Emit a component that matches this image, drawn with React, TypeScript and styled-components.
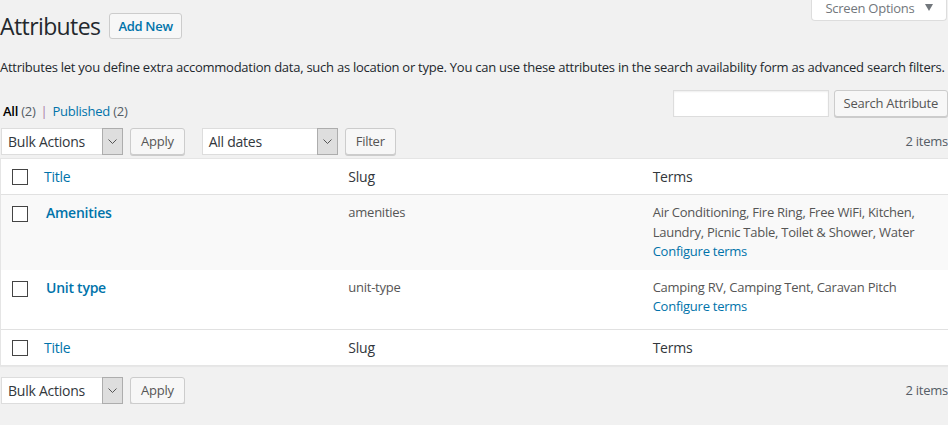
import React from "react";
import styled, { createGlobalStyle } from "styled-components";

const FONT = `"Open Sans", "Noto Sans", "Liberation Sans", sans-serif`;

const GlobalStyle = createGlobalStyle`
  html, body { margin: 0; padding: 0; }
  body {
    background: #f1f1f1;
    font-family: ${FONT};
    font-size: 13px;
    letter-spacing: -0.25px;
    color: #444;
    overflow: hidden;
  }
  * { box-sizing: border-box; }
`;

const Wrap = styled.div`
  width: 950px;
  display: flex;
  flex-direction: column;
`;

const Header = styled.div`
  display: flex;
  align-items: flex-start;
  height: 48px;
`;

const Title = styled.h1`
  margin: 12px 0 0 0;
  font-size: 23px;
  line-height: 29px;
  font-weight: 400;
  letter-spacing: -0.6px;
  color: #23282d;
`;

const Button = styled.button`
  font-family: ${FONT};
  letter-spacing: -0.25px;
  height: 27px;
  padding: 0 10px;
  font-size: 13px;
  line-height: 25px;
  background: #f7f7f7;
  border: 1px solid #ccc;
  border-radius: 3px;
  box-shadow: 0 1px 0 #ccc;
  color: #555;
  white-space: nowrap;
`;

const AddNew = styled(Button)`
  margin: 13px 0 0 9px;
  height: 26px;
  padding: 0 8px;
  color: #0073aa;
  font-weight: 600;
  letter-spacing: -0.3px;
  box-shadow: none;
`;

const SearchButton = styled(Button)`
  padding: 0 9px;
`;

const ScreenOptions = styled.div`
  margin-left: auto;
  margin-right: 3px;
  height: 21px;
  width: 136px;
  background: #fff;
  border: 1px solid #ddd;
  border-top: none;
  border-radius: 0 0 4px 4px;
  display: flex;
  align-items: flex-start;
  justify-content: center;
  gap: 10px;
  padding-top: 1px;
  line-height: 14px;
  color: #72777c;
  font-size: 13px;
`;

const Caret = styled.span`
  width: 0;
  height: 0;
  margin-top: 3px;
  border-left: 4px solid transparent;
  border-right: 4px solid transparent;
  border-top: 7px solid #72777c;
`;

const Desc = styled.p`
  margin: 9px 0 0 0;
  line-height: 20px;
  color: #23282d;
  white-space: nowrap;
`;

const SearchRow = styled.div`
  margin-top: 13px;
  height: 31px;
  display: flex;
  align-items: flex-start;
`;

const SubSub = styled.div`
  align-self: flex-end;
  line-height: 20px;
  padding-left: 3px;
  color: #666;
  display: flex;
  gap: 3px;
`;

const Current = styled.span`
  color: #000;
  font-weight: 600;
`;

const Count = styled.span`
  color: #555d66;
`;

const Sep = styled.span`
  color: #a77aa6;
  margin: 0 2px;
`;

const Link = styled.span`
  color: #0073aa;
`;

const SearchBox = styled.div`
  margin-left: auto;
  display: flex;
  gap: 5px;
  margin-right: 2px;
`;

const Input = styled.div`
  width: 156px;
  height: 27px;
  background: #fff;
  border: 1px solid #ddd;
  box-shadow: inset 0 1px 2px rgba(0, 0, 0, 0.07);
`;

const TableNav = styled.div<{ $top?: boolean }>`
  display: flex;
  align-items: center;
  height: 28px;
  margin-top: ${(p) => (p.$top ? "6px" : "10px")};
`;

const Group = styled.div`
  display: flex;
  align-items: center;
  gap: 7px;
  margin-right: 16px;
`;

const Select = styled.div<{ $w: number }>`
  width: ${(p) => p.$w}px;
  height: 27px;
  background: #fff;
  border: 1px solid #ddd;
  display: flex;
  align-items: center;
  justify-content: space-between;
  color: #32373c;
  font-size: 14px;
  padding-left: 6px;
  margin-left: 1px;
`;

const Arrow = styled.span`
  width: 21px;
  height: 27px;
  margin: -1px -1px -1px 0;
  background: #dedede;
  border: 1px solid #adadad;
  display: flex;
  align-items: center;
  justify-content: center;
`;

const Items = styled.div`
  margin-left: auto;
  margin-right: 2px;
  color: #555d66;
`;

const Table = styled.div`
  margin-top: 3px;
  background: #fff;
  border: 1px solid #e5e5e5;
  box-shadow: 0 1px 1px rgba(0, 0, 0, 0.04);
`;

const Row = styled.div<{ $kind: "head" | "odd" | "even" | "foot" }>`
  display: grid;
  grid-template-columns: 35px 1fr 1fr 1fr;
  background: ${(p) => (p.$kind === "odd" ? "#f9f9f9" : "#fff")};
  border-bottom: ${(p) => (p.$kind === "head" ? "1px solid #e1e1e1" : "none")};
  border-top: ${(p) => (p.$kind === "foot" ? "1px solid #e1e1e1" : "none")};
  min-height: ${(p) => (p.$kind === "head" || p.$kind === "foot" ? "36px" : "0")};
`;

const CheckCell = styled.div<{ $head?: boolean }>`
  padding: ${(p) => (p.$head ? "10px" : "11px")} 0 0 11px;
`;

const Check = styled.span`
  display: block;
  width: 16px;
  height: 16px;
  border: 1px solid #444;
  background: #fff;
`;

const HeadCell = styled.div<{ $link?: boolean }>`
  padding: 0 8px;
  display: flex;
  align-items: center;
  font-size: 14px;
  color: ${(p) => (p.$link ? "#0073aa" : "#32373c")};
`;

const Cell = styled.div<{ $title?: boolean }>`
  padding: 8px 8px ${(p) => (p.$title ? "31px" : "8px")} 8px;
  line-height: 19.5px;
  font-size: 13px;
  color: #555;
`;

const RowTitle = styled.strong`
  font-size: 14px;
  font-weight: 600;
  color: #0073aa;
  padding-left: 2px;
`;

const TermsLink = styled.div`
  color: #0073aa;
`;

const Chevron = () => (
  <svg width="9" height="5" viewBox="0 0 9 5">
    <polyline points="0.5,0.5 4.5,4.5 8.5,0.5" fill="none" stroke="#555" strokeWidth="1" />
  </svg>
);

const Nav = ({ top }: { top?: boolean }) => (
  <TableNav $top={top}>
    <Group>
      <Select $w={122}>
        Bulk Actions
        <Arrow>
          <Chevron />
        </Arrow>
      </Select>
      <Button>Apply</Button>
    </Group>
    {top && (
      <Group>
        <Select $w={136}>
          All dates
          <Arrow>
            <Chevron />
          </Arrow>
        </Select>
        <Button>Filter</Button>
      </Group>
    )}
    <Items>2 items</Items>
  </TableNav>
);

const HeadRow = ({ kind }: { kind: "head" | "foot" }) => (
  <Row $kind={kind}>
    <CheckCell $head>
      <Check />
    </CheckCell>
    <HeadCell $link>Title</HeadCell>
    <HeadCell>Slug</HeadCell>
    <HeadCell>Terms</HeadCell>
  </Row>
);

const rows = [
  {
    title: "Amenities",
    slug: "amenities",
    terms: [
      "Air Conditioning, Fire Ring, Free WiFi, Kitchen,",
      "Laundry, Picnic Table, Toilet & Shower, Water",
    ],
  },
  {
    title: "Unit type",
    slug: "unit-type",
    terms: ["Camping RV, Camping Tent, Caravan Pitch"],
  },
];

export default function App() {
  return (
    <Wrap>
      <GlobalStyle />
      <Header>
        <Title>Attributes</Title>
        <AddNew>Add New</AddNew>
        <ScreenOptions>
          Screen Options <Caret />
        </ScreenOptions>
      </Header>
      <Desc>
        Attributes let you define extra accommodation data, such as location or type. You can use these
        attributes in the search availability form as advanced search filters.
      </Desc>
      <SearchRow>
        <SubSub>
          <span>
            <Current>All</Current> <Count>(2)</Count>
          </span>
          <Sep>|</Sep>
          <span>
            <Link>Published</Link> <Count>(2)</Count>
          </span>
        </SubSub>
        <SearchBox>
          <Input />
          <SearchButton>Search Attribute</SearchButton>
        </SearchBox>
      </SearchRow>
      <Nav top />
      <Table>
        <HeadRow kind="head" />
        {rows.map((r, i) => (
          <Row key={r.slug} $kind={i % 2 === 0 ? "odd" : "even"}>
            <CheckCell>
              <Check />
            </CheckCell>
            <Cell $title>
              <RowTitle>{r.title}</RowTitle>
            </Cell>
            <Cell>{r.slug}</Cell>
            <Cell>
              {r.terms.map((t) => (
                <div key={t}>{t}</div>
              ))}
              <TermsLink>Configure terms</TermsLink>
            </Cell>
          </Row>
        ))}
        <HeadRow kind="foot" />
      </Table>
      <Nav />
    </Wrap>
  );
}
